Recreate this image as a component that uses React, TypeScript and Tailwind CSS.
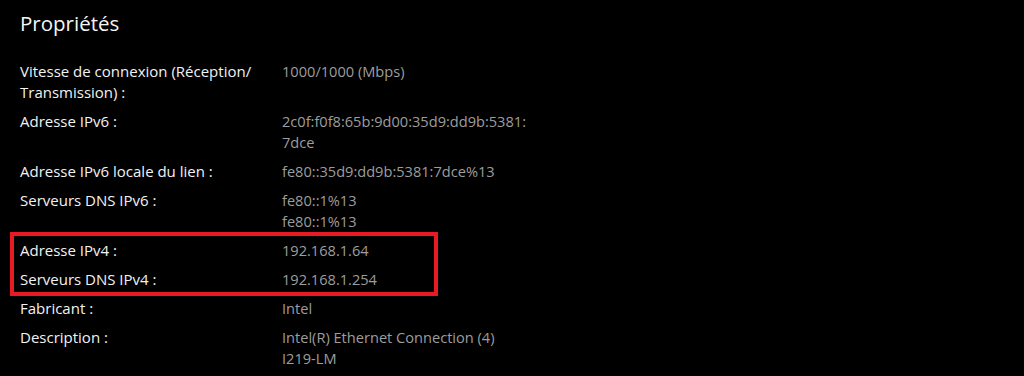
import React from "react";

type Row = { label: string[]; value: string[] };

const before: Row[] = [
  { label: ["Vitesse de connexion (Réception/", "Transmission) :"], value: ["1000/1000 (Mbps)"] },
  { label: ["Adresse IPv6 :"], value: ["2c0f:f0f8:65b:9d00:35d9:dd9b:5381:", "7dce"] },
  { label: ["Adresse IPv6 locale du lien :"], value: ["fe80::35d9:dd9b:5381:7dce%13"] },
  { label: ["Serveurs DNS IPv6 :"], value: ["fe80::1%13", "fe80::1%13"] },
];

const highlighted: Row[] = [
  { label: ["Adresse IPv4 :"], value: ["192.168.1.64"] },
  { label: ["Serveurs DNS IPv4 :"], value: ["192.168.1.254"] },
];

const after: Row[] = [
  { label: ["Fabricant :"], value: ["Intel"] },
  { label: ["Description :"], value: ["Intel(R) Ethernet Connection (4)", "I219-LM"] },
];

function PropRow({ row }: { row: Row }) {
  return (
    <div className="grid grid-cols-[262px_1fr] leading-[21px]">
      <div className="text-[#f2f2f2]">
        {row.label.map((l, i) => (
          <div key={i} className="whitespace-nowrap">{l}</div>
        ))}
      </div>
      <div className="text-[#9d9d9d] text-[14.6px]">
        {row.value.map((v, i) => (
          <div key={i} className="whitespace-nowrap">{v}</div>
        ))}
      </div>
    </div>
  );
}

export default function App() {
  return (
    <div
      className="w-full h-[376px] bg-black overflow-hidden pl-[20px] text-[15px]"
      style={{ fontFamily: '"Open Sans", "Noto Sans", sans-serif' }}
    >
      <h1 className="text-[20.5px] leading-[28px] pt-[9px] text-[#f5f5f5]">Propriétés</h1>
      <div className="mt-[24px] flex flex-col gap-[8px]">
        {before.map((r, i) => (
          <PropRow key={i} row={r} />
        ))}
        <div className="relative flex flex-col gap-[8px]">
          <div className="absolute left-[-10px] top-[-8px] w-[428px] h-[64px] border-[4px] border-[#e81b23] pointer-events-none" />
          {highlighted.map((r, i) => (
            <PropRow key={i} row={r} />
          ))}
        </div>
        {after.map((r, i) => (
          <PropRow key={i} row={r} />
        ))}
      </div>
    </div>
  );
}
